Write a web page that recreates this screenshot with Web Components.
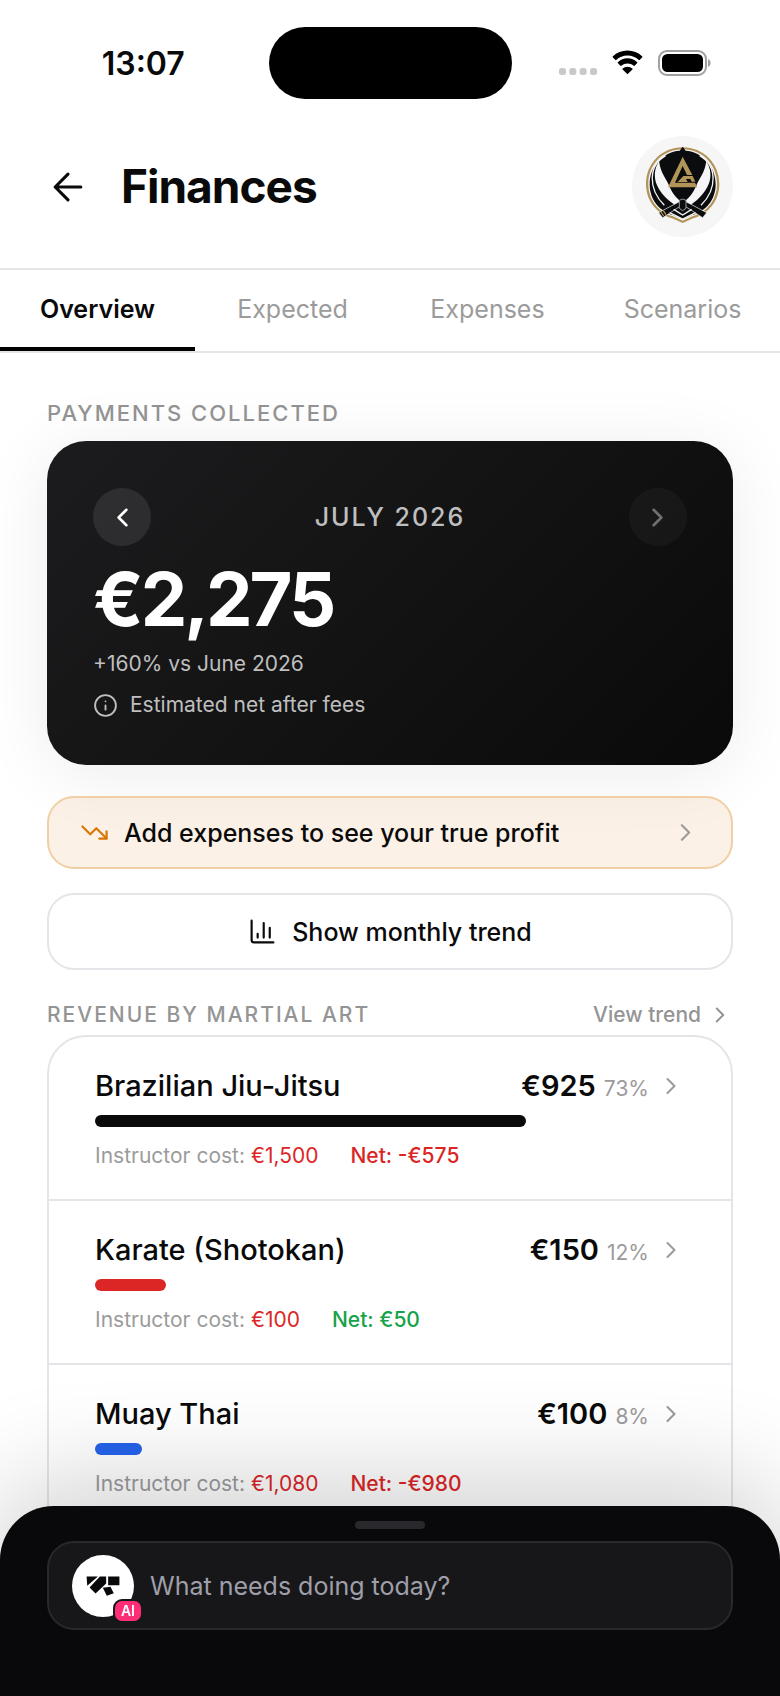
<!DOCTYPE html>
<html lang="en">
<head>
<meta charset="utf-8">
<meta name="viewport" content="width=device-width, initial-scale=1">
<title>Finances</title>
<style>
  :root {
    --ink: #0a0a0b;
    --muted: #9b9b9b;
    --line: #e5e5e9;
    --red: #dc2626;
    --green: #16a34a;
    --edge: 47px;
  }
  body { margin: 0; background: #fff; color: var(--ink); font-family: Inter, "Liberation Sans", sans-serif; }
</style>
</head>
<body>
<finance-app></finance-app>

<script>
const define = (name, html, setup) => {
  const template = document.createElement('template');
  template.innerHTML = html;
  customElements.define(name, class extends HTMLElement {
    constructor() {
      super();
      this.attachShadow({ mode: 'open' }).append(template.content.cloneNode(true));
    }
    connectedCallback() { if (setup) setup(this, this.shadowRoot); }
  });
};

/* Stroke icons on a 24-unit grid; size and weight come from custom properties. */
const ICONS = {
  back: '<path d="M12 19l-7-7 7-7M19 12H5"/>',
  left: '<path d="M15 18l-6-6 6-6"/>',
  right: '<path d="M9 18l6-6-6-6"/>',
  info: '<circle cx="12" cy="12" r="10"/><path d="M12 16v-4M12 8h.01"/>',
  down: '<path d="M16 17h6v-6"/><path d="M22 17l-8.500-8.500-5 5L2 7"/>',
  chart: '<path d="M3 3v16a2 2 0 0 0 2 2h16M18 17V9M13 17V5M8 17v-3"/>'
};
define('ui-icon', `
  <style>
    :host { display: block; flex: none; width: var(--icon, 28px); height: var(--icon, 28px); }
    svg { display: block; width: 100%; height: 100%; fill: none; stroke: currentColor; stroke-width: var(--weight, 1.800); stroke-linecap: round; stroke-linejoin: round; }
  </style>
  <svg viewBox="0 0 24 24" aria-hidden="true"></svg>`,
  (host, root) => { root.querySelector('svg').innerHTML = ICONS[host.getAttribute('name')]; });

define('status-bar', `
  <style>
    :host { display: grid; grid-template-columns: 1fr 243px 1fr; align-items: center; padding: 27px 0 0; }
    time { justify-self: center; padding: 2px 0 0 18px; font-size: 32px; line-height: 40px; font-weight: 600; }
    .island { height: 72px; border-radius: 36px; background: #000; }
    .signals { justify-self: center; display: flex; align-items: center; gap: 14px; padding-right: 22px; }
    svg { display: block; }
  </style>
  <time>13:07</time>
  <div class="island"></div>
  <div class="signals">
    <svg width="38" height="26" viewBox="0 0 38 26" fill="#c9c9c9"><rect y="18" width="7" height="7" rx="2.500"/><rect x="10.300" y="18" width="7" height="7" rx="2.500"/><rect x="20.600" y="18" width="7" height="7" rx="2.500"/><rect x="31" y="18" width="7" height="7" rx="2.500"/></svg>
    <svg width="33" height="26" viewBox="0 0 33 26"><path d="M16.500 5.500c4.300 0 8.300 1.700 11.300 4.500.3.200.6.200.8 0l2.700-2.700c.3-.3.300-.7 0-.9C27.300 2.600 22.100.5 16.500.5S5.700 2.600 1.700 6.400c-.3.300-.3.700 0 .9L4.400 10c.2.200.6.200.8 0 3-2.800 7-4.500 11.300-4.500zm0 8c2.300 0 4.500.8 6.200 2.300.3.200.6.200.9 0l2.600-2.700c.3-.3.300-.7 0-.9a14.200 14.200 0 0 0-19.400 0c-.3.300-.3.700 0 .9l2.600 2.700c.3.200.6.200.9 0a9.400 9.400 0 0 1 6.200-2.300zm4.900 5.900c.3-.3.300-.6 0-.9a7.700 7.700 0 0 0-9.800 0c-.3.300-.3.600 0 .9l4.400 4.400c.3.300.7.300 1 0z"/></svg>
    <svg width="53" height="26" viewBox="0 0 53 26"><rect x="1" y="1" width="47" height="24" rx="8" fill="none" stroke="#a0a0a0" stroke-width="2"/><rect x="4" y="4" width="41" height="18" rx="5.500"/><path d="M50 9v8c1.700-.7 2.600-2.200 2.600-4S51.700 9.700 50 9z" fill="#a0a0a0"/></svg>
  </div>`);

define('club-logo', `
  <style>
    :host { display: block; flex: none; width: 101px; height: 101px; border-radius: 50%; background: #f6f6f6; }
    svg { display: block; width: 100%; height: 100%; }
  </style>
  <svg viewBox="37 32 303 303" role="img" aria-label="Club logo">
    <path d="M189 66C126 66 79 115 79 176c0 54 37 91 78 103l32 14 32-14c41-12 78-49 78-103 0-61-47-110-110-110z" fill="#b29358"/>
    <path d="M189 72C130 72 86 118 86 176c0 50 33 86 74 97l29 13 29-13c41-11 74-47 74-97 0-58-44-104-103-104z" fill="#f6f6f6"/>
    <path d="M189 64l9 12c51 3 90 48 90 101 0 47-30 82-72 93l-27 12-27-12c-42-11-72-46-72-93 0-53 39-98 90-101z" fill="#0b0c0e"/>
    <path d="M138 91C86 120 84 190 134 240M240 91c52 29 54 99 4 149" fill="none" stroke="#f6f6f6" stroke-width="4"/>
    <path d="M118 106c-22 38-16 78 28 118l28 22 15-14c-26-18-34-36-42-54-8-20-24-34-29-72zM260 106c22 38 16 78-28 118l-28 22-15-14c26-18 34-36 42-54 8-20 24-34 29-72z" fill="#f6f6f6"/>
    <path d="M189 94l-44 92h88l-7-14h-60l23-50 13 27h16z" fill="#b29358"/>
    <path d="M191 152h28l8 17h-11l-4-8h-13l5 9h-30z" fill="#b29358"/>
    <path d="M179 229l10 9-60 39-12-15zM199 229l-10 9 60 39 12-15z" fill="#0b0c0e" stroke="#f6f6f6" stroke-width="2"/>
    <path d="M179 225l10-4 10 4v24l-10 7-10-7z" fill="#0b0c0e" stroke="#9a9a9a" stroke-width="3"/>
    <path d="M150 262l39 19 39-19M162 252l27 17 27-17" fill="none" stroke="#f6f6f6" stroke-width="4"/>
    <path d="M124 260l8 12M131 256l8 12" stroke="#b29358" stroke-width="4"/>
  </svg>`);

define('page-header', `
  <style>
    :host { display: flex; align-items: center; padding: 37px var(--edge) 31px 46px; }
    button { display: block; padding: 0; border: 0; background: none; color: inherit; --icon: 44px; --weight: 1.700; }
    h1 { flex: 1; margin: 0 0 2px 31px; font-size: 46px; line-height: 56px; font-weight: 700; letter-spacing: -1px; }
  </style>
  <button aria-label="Back"><ui-icon name="back"></ui-icon></button>
  <h1><slot></slot></h1>
  <club-logo></club-logo>`);

define('tab-bar', `
  <style>
    :host { display: block; border: solid var(--line); border-width: 2px 0; }
    nav { display: grid; grid-template-columns: repeat(4, 1fr); }
    a { padding: 23px 0 22px; border-bottom: 4px solid transparent; text-align: center; text-decoration: none; font-size: 25px; line-height: 32px; color: var(--muted); }
    a[aria-current] { color: var(--ink); font-weight: 600; border-color: #000; }
  </style>
  <nav><a href="#overview" aria-current="page">Overview</a><a href="#expected">Expected</a><a href="#expenses">Expenses</a><a href="#scenarios">Scenarios</a></nav>`);

define('section-head', `
  <style>
    :host { display: flex; justify-content: space-between; align-items: center; line-height: 28px; color: #949494; font-size: 22px; }
    h2 { margin: 0; font-size: inherit; font-weight: 500; letter-spacing: 2px; }
    ::slotted(a) { display: flex; align-items: center; gap: 6px; color: inherit; text-decoration: none; font-weight: 500; }
  </style>
  <h2><slot></slot></h2><slot name="action"></slot>`);

define('payments-card', `
  <style>
    :host { display: block; padding: 47px 46px 46px; border-radius: 39px; color: #bfbfbf; background: linear-gradient(135deg, #1c1c1e, #0a0a0a); box-shadow: 0 8px 70px rgba(0, 20, 10, .08); }
    .month { display: flex; justify-content: space-between; align-items: center; font-size: 25px; font-weight: 500; letter-spacing: 2px; }
    button { display: grid; place-items: center; width: 58px; height: 58px; padding: 0; border: 0; border-radius: 50%; color: #fff; background: rgba(255, 255, 255, .09); --icon: 31px; --weight: 2; }
    button:disabled { opacity: .4; }
    .total { margin: 8px 0 0; color: #fff; font-size: 74px; line-height: 90px; font-weight: 700; letter-spacing: -3px; }
    p { margin: 6px 0 0; font-size: 21px; line-height: 28px; }
    .note { display: flex; align-items: center; gap: 12px; margin-top: 13px; --icon: 25px; }
  </style>
  <div class="month">
    <button aria-label="Previous month"><ui-icon name="left"></ui-icon></button>
    <span>JULY 2026</span>
    <button aria-label="Next month" disabled><ui-icon name="right"></ui-icon></button>
  </div>
  <div class="total">€2,275</div>
  <p>+160% vs June 2026</p>
  <p class="note"><ui-icon name="info"></ui-icon><span>Estimated net after fees</span></p>`);

define('action-button', `
  <style>
    :host { display: block; }
    button { display: flex; align-items: center; justify-content: center; gap: 15px; box-sizing: border-box; width: 100%; min-height: 77px; padding: 0 31px; border: 2px solid var(--line); border-radius: 27px; background: none; color: var(--ink); font: 500 25px/32px Inter, "Liberation Sans", sans-serif; --icon: 29px; }
    :host([tone="warn"]) button { min-height: 73px; border-color: #f1cfa5; background: rgba(217, 119, 6, .1); }
    :host([tone="warn"]) .label { flex: 1; text-align: left; }
  </style>
  <button><slot name="icon"></slot><span class="label"><slot></slot></span><slot name="end"></slot></button>`);

define('revenue-row', `
  <style>
    :host { display: block; padding: 31px 46px 29px; border-bottom: 2px solid var(--line); }
    .top { display: flex; align-items: baseline; font-size: 29px; line-height: 36px; font-weight: 500; }
    h3 { flex: 1; margin: 0; font: inherit; }
    strong { font-weight: 600; }
    small { margin: 0 8px; font-size: 21px; line-height: 28px; font-weight: 400; color: var(--muted); }
    ui-icon { align-self: center; color: var(--muted); }
    .bar { height: 12px; margin: 11px 0 15px; border-radius: 6px; }
    .costs { display: flex; gap: 32px; font-size: 21px; line-height: 28px; color: var(--muted); }
    .cost { color: var(--red); }
    .net { font-weight: 500; color: var(--red); }
    .net.gain { color: var(--green); }
  </style>
  <div class="top"><h3></h3><strong></strong><small></small><ui-icon name="right"></ui-icon></div>
  <div class="bar"></div>
  <div class="costs"><span>Instructor cost: <span class="cost"></span></span><span class="net"></span></div>`,
  (host, root) => {
    const get = key => host.getAttribute(key);
    const put = (selector, text) => { root.querySelector(selector).textContent = text; };
    put('h3', get('name'));
    put('strong', get('amount'));
    put('small', get('share'));
    put('.cost', get('cost'));
    put('.net', 'Net: ' + get('net'));
    root.querySelector('.net').classList.toggle('gain', !get('net').startsWith('-'));
    const bar = root.querySelector('.bar');
    bar.style.width = get('share');
    bar.style.background = get('color');
  });

define('assistant-dock', `
  <style>
    :host { position: fixed; inset: auto 0 0; display: block; padding: 15px var(--edge) 66px; border-radius: 54px 54px 0 0; background: #09090b; box-shadow: 0 -20px 110px rgba(9, 9, 20, .2); }
    .grip { width: 70px; height: 8px; margin: 0 auto 12px; border-radius: 4px; background: #29292d; }
    label { display: flex; align-items: center; gap: 16px; height: 85px; padding: 0 23px; border: 2px solid #29292c; border-radius: 27px; background: #17171a; }
    .avatar { position: relative; flex: none; width: 62px; height: 62px; border-radius: 50%; background: #fff; }
    .avatar svg { display: block; width: 100%; height: 100%; fill: #09090b; }
    .badge { position: absolute; right: -9px; bottom: -6px; padding: 0 6px; border: 2px solid #17171a; border-radius: 9px; background: #ff2d78; color: #fff; font-size: 14px; line-height: 20px; font-weight: 600; }
    input { flex: 1; min-width: 0; padding: 0; border: 0; outline: 0; background: none; color: #fff; font: 400 25px/32px Inter, "Liberation Sans", sans-serif; }
    input::placeholder { color: #9f9fa9; opacity: 1; }
  </style>
  <div class="grip"></div>
  <label>
    <span class="avatar">
      <svg viewBox="36 42 187 187" aria-hidden="true"><path d="M80 107h34l-32 28zM120 107h19v21l-32 30-18-18zM145 107h34v26h-34zM129 141l23-3 10 19-21 8z"/></svg>
      <span class="badge">AI</span>
    </span>
    <input type="text" placeholder="What needs doing today?" aria-label="What needs doing today?">
  </label>`);

define('finance-app', `
  <style>
    :host { display: block; min-height: 100vh; }
    main { display: flex; flex-direction: column; padding: 46px var(--edge) 100px; }
    payments-card { margin-top: 14px; }
    action-button { margin-top: 24px; }
    action-button[tone] { margin-top: 31px; }
    action-button[tone] ui-icon[slot="icon"] { color: #d97706; }
    action-button ui-icon[slot="end"] { color: var(--muted); }
    .revenue { margin-top: 31px; font-size: 21px; }
    .view { --icon: 26px; }
    .list { margin-top: 6px; padding-bottom: 40px; border: 2px solid var(--line); border-radius: 39px; }
  </style>
  <status-bar></status-bar>
  <page-header>Finances</page-header>
  <tab-bar></tab-bar>
  <main>
    <section-head>PAYMENTS COLLECTED</section-head>
    <payments-card></payments-card>
    <action-button tone="warn"><ui-icon slot="icon" name="down"></ui-icon>Add expenses to see your true profit<ui-icon slot="end" name="right"></ui-icon></action-button>
    <action-button><ui-icon slot="icon" name="chart"></ui-icon>Show monthly trend</action-button>
    <section-head class="revenue">REVENUE BY MARTIAL ART<a class="view" slot="action" href="#trend">View trend<ui-icon name="right"></ui-icon></a></section-head>
    <div class="list">
      <revenue-row name="Brazilian Jiu-Jitsu" amount="€925" share="73%" cost="€1,500" net="-€575" color="#0a0a0a"></revenue-row>
      <revenue-row name="Karate (Shotokan)" amount="€150" share="12%" cost="€100" net="€50" color="#dc2626"></revenue-row>
      <revenue-row name="Muay Thai" amount="€100" share="8%" cost="€1,080" net="-€980" color="#2563eb"></revenue-row>
    </div>
  </main>
  <assistant-dock></assistant-dock>`);
</script>
</body>
</html>
